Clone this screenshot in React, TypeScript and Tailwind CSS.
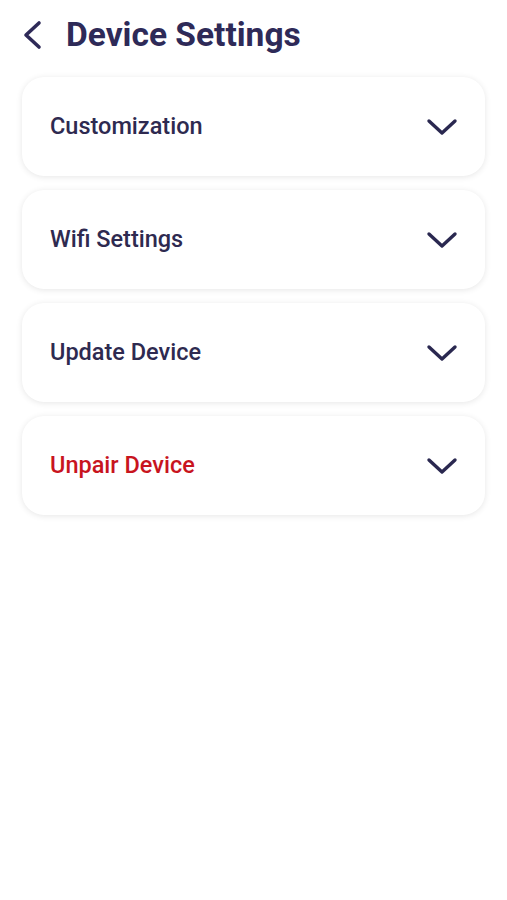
const items = [
  { label: "Customization", danger: false },
  { label: "Wifi Settings", danger: false },
  { label: "Update Device", danger: false },
  { label: "Unpair Device", danger: true },
];

function BackArrow() {
  return (
    <svg width="24" height="30" viewBox="0 0 24 30" fill="none" className="text-[#2e2a58]">
      <polyline
        points="19,3 6,15 19,27"
        stroke="currentColor"
        strokeWidth="3.6"
        strokeLinecap="round"
        strokeLinejoin="round"
      />
    </svg>
  );
}

function Caret() {
  return (
    <svg width="32" height="20" viewBox="0 0 32 20" fill="none" className="text-[#2a2850]">
      <polyline
        points="3,4 16,16 29,4"
        stroke="currentColor"
        strokeWidth="3.4"
        strokeLinecap="round"
        strokeLinejoin="round"
      />
    </svg>
  );
}

export default function App() {
  return (
    <div
      className="min-h-[900px] w-full bg-white"
      style={{ fontFamily: "Roboto, 'Noto Sans', sans-serif" }}
    >
      <header className="flex items-center gap-[22px] pl-[20px] pt-[14px]">
        <BackArrow />
        <h1 className="text-[33.5px] font-bold leading-[42px] text-[#2e2a58]">
          Device Settings
        </h1>
      </header>

      <div className="mt-[21px] flex flex-col gap-[14px] px-[22px]">
        {items.map((item) => (
          <button
            key={item.label}
            className="flex h-[99px] w-full items-center justify-between rounded-[22px] bg-white pl-[28px] pr-[27px] shadow-[0_1px_6px_rgba(0,0,0,0.10)]"
          >
            <span
              className={`text-[23.5px] font-medium ${
                item.danger ? "text-[#c8141e]" : "text-[#2e2a50]"
              }`}
            >
              {item.label}
            </span>
            <Caret />
          </button>
        ))}
      </div>
    </div>
  );
}
